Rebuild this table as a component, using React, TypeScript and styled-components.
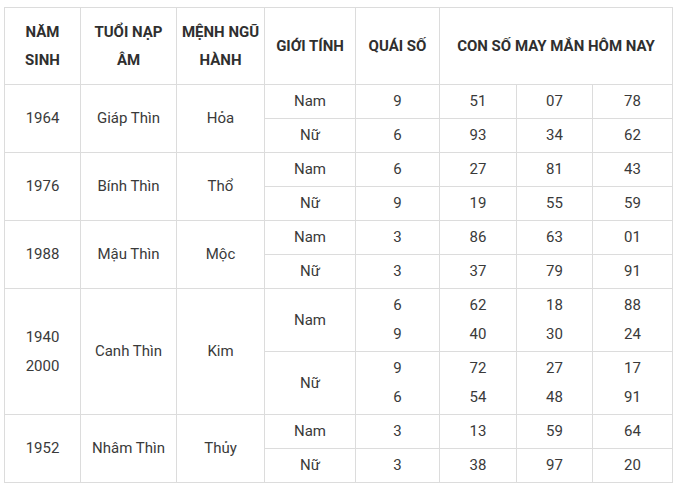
import React from 'react';
import styled, { createGlobalStyle } from 'styled-components';

const GlobalStyle = createGlobalStyle`
  html, body {
    margin: 0;
    padding: 0;
    background: #fff;
  }
  body {
    font-family: Roboto, "Liberation Sans", Arial, sans-serif;
  }
`;

const Page = styled.div`
  padding: 7px 0 0 4px;
`;

const Table = styled.table`
  border-collapse: collapse;
  table-layout: fixed;
  width: 669px;
  font-size: 15px;
  color: #3a3a3a;
`;

const HeadCell = styled.th`
  border: 1px solid #dcdcdc;
  height: 76px;
  padding: 0;
  font-weight: 700;
  line-height: 28px;
  color: #2f2f2f;
  text-align: center;
  vertical-align: middle;
`;

const Cell = styled.td<{ $tall?: boolean }>`
  border: 1px solid #dcdcdc;
  height: ${(p) => (p.$tall ? '62px' : '33px')};
  padding: 0;
  line-height: 29px;
  text-align: center;
  vertical-align: middle;
`;

interface GenderRow {
  gender: string;
  quai: string[];
  nums: string[][];
}

interface Group {
  years: string[];
  tuoi: string;
  menh: string;
  rows: GenderRow[];
}

const groups: Group[] = [
  {
    years: ['1964'],
    tuoi: 'Giáp Thìn',
    menh: 'Hỏa',
    rows: [
      { gender: 'Nam', quai: ['9'], nums: [['51', '07', '78']] },
      { gender: 'Nữ', quai: ['6'], nums: [['93', '34', '62']] },
    ],
  },
  {
    years: ['1976'],
    tuoi: 'Bính Thìn',
    menh: 'Thổ',
    rows: [
      { gender: 'Nam', quai: ['6'], nums: [['27', '81', '43']] },
      { gender: 'Nữ', quai: ['9'], nums: [['19', '55', '59']] },
    ],
  },
  {
    years: ['1988'],
    tuoi: 'Mậu Thìn',
    menh: 'Mộc',
    rows: [
      { gender: 'Nam', quai: ['3'], nums: [['86', '63', '01']] },
      { gender: 'Nữ', quai: ['3'], nums: [['37', '79', '91']] },
    ],
  },
  {
    years: ['1940', '2000'],
    tuoi: 'Canh Thìn',
    menh: 'Kim',
    rows: [
      { gender: 'Nam', quai: ['6', '9'], nums: [['62', '18', '88'], ['40', '30', '24']] },
      { gender: 'Nữ', quai: ['9', '6'], nums: [['72', '27', '17'], ['54', '48', '91']] },
    ],
  },
  {
    years: ['1952'],
    tuoi: 'Nhâm Thìn',
    menh: 'Thủy',
    rows: [
      { gender: 'Nam', quai: ['3'], nums: [['13', '59', '64']] },
      { gender: 'Nữ', quai: ['3'], nums: [['38', '97', '20']] },
    ],
  },
];

const colWidths = [76, 96, 88, 91, 84, 77, 76, 80];

function Lines({ items }: { items: string[] }) {
  return (
    <>
      {items.map((t, i) => (
        <React.Fragment key={i}>
          {i > 0 && <br />}
          {t}
        </React.Fragment>
      ))}
    </>
  );
}

function App() {
  return (
    <Page>
      <GlobalStyle />
      <Table>
        <colgroup>
          {colWidths.map((w, i) => (
            <col key={i} style={{ width: w }} />
          ))}
        </colgroup>
        <thead>
          <tr>
            <HeadCell>NĂM<br />SINH</HeadCell>
            <HeadCell>TUỔI NẠP<br />ÂM</HeadCell>
            <HeadCell>MỆNH NGŨ<br />HÀNH</HeadCell>
            <HeadCell>GIỚI TÍNH</HeadCell>
            <HeadCell>QUÁI SỐ</HeadCell>
            <HeadCell colSpan={3}>CON SỐ MAY MẮN HÔM NAY</HeadCell>
          </tr>
        </thead>
        <tbody>
          {groups.map((g) =>
            g.rows.map((r, ri) => {
              const tall = r.quai.length > 1;
              return (
                <tr key={g.tuoi + r.gender}>
                  {ri === 0 && (
                    <>
                      <Cell rowSpan={g.rows.length}>
                        <Lines items={g.years} />
                      </Cell>
                      <Cell rowSpan={g.rows.length}>{g.tuoi}</Cell>
                      <Cell rowSpan={g.rows.length}>{g.menh}</Cell>
                    </>
                  )}
                  <Cell $tall={tall}>{r.gender}</Cell>
                  <Cell $tall={tall}>
                    <Lines items={r.quai} />
                  </Cell>
                  {[0, 1, 2].map((c) => (
                    <Cell key={c} $tall={tall}>
                      <Lines items={r.nums.map((n) => n[c])} />
                    </Cell>
                  ))}
                </tr>
              );
            })
          )}
        </tbody>
      </Table>
    </Page>
  );
}

export default App;
